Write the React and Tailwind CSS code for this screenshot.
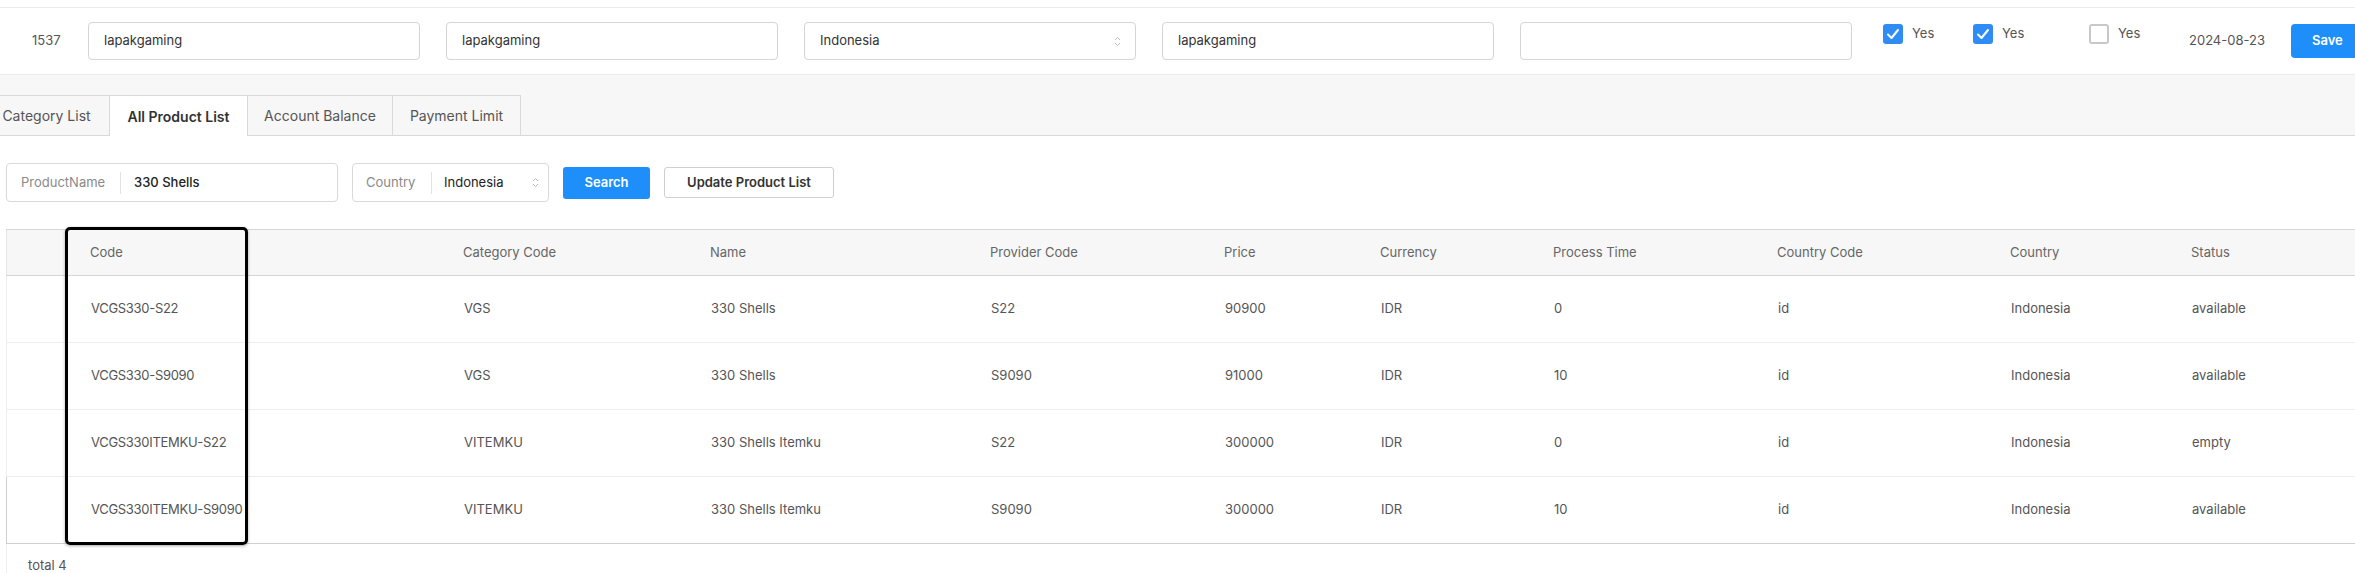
import React from "react";

const rows = [
  { code: "VCGS330-S22", cat: "VGS", name: "330 Shells", provider: "S22", price: "90900", currency: "IDR", time: "0", cc: "id", country: "Indonesia", status: "available" },
  { code: "VCGS330-S9090", cat: "VGS", name: "330 Shells", provider: "S9090", price: "91000", currency: "IDR", time: "10", cc: "id", country: "Indonesia", status: "available" },
  { code: "VCGS330ITEMKU-S22", cat: "VITEMKU", name: "330 Shells Itemku", provider: "S22", price: "300000", currency: "IDR", time: "0", cc: "id", country: "Indonesia", status: "empty" },
  { code: "VCGS330ITEMKU-S9090", cat: "VITEMKU", name: "330 Shells Itemku", provider: "S9090", price: "300000", currency: "IDR", time: "10", cc: "id", country: "Indonesia", status: "available" },
];

const headers = ["", "Code", "Category Code", "Name", "Provider Code", "Price", "Currency", "Process Time", "Country Code", "Country", "Status"];

const gridCols = "grid grid-cols-[72px_373px_247px_280px_234px_156px_173px_224px_233px_181px_1fr]";

const Chevrons = () => (
  <svg width="7" height="11" viewBox="0 0 7 11" fill="none" stroke="#b8bcc4" strokeWidth="1">
    <path d="M1 4 L3.5 1.5 L6 4" />
    <path d="M1 7 L3.5 9.5 L6 7" />
  </svg>
);

const Check = ({ checked }) => (
  <div className={checked ? "w-[20px] h-[20px] shrink-0 rounded-[3px] bg-[#2f8cf4] flex items-center justify-center" : "w-[20px] h-[20px] shrink-0 rounded-[3px] border-2 border-[#c8c8c8] bg-white"}>
    {checked && (
      <svg width="14" height="12" viewBox="0 0 14 12" fill="none" stroke="white" strokeWidth="2" strokeLinecap="round" strokeLinejoin="round">
        <path d="M2 6.5 L5.5 10 L12 2" />
      </svg>
    )}
  </div>
);

const TextInput = ({ value, select }) => (
  <div className="w-[332px] h-[38px] shrink-0 border border-[#d4d4d4] rounded-[4px] bg-white flex items-center pl-[15px] pr-[14px] text-[13px] text-[#333]">
    <span className="flex-1">{value}</span>
    {select && <Chevrons />}
  </div>
);

const App = () => {
  return (
    <div className="w-[2355px] h-[573px] overflow-hidden bg-white text-[#333] font-['Inter','Liberation_Sans',sans-serif]">
      {/* edit row */}
      <div className="mt-[7px] h-[68px] border-t border-b border-[#ececec] flex items-center pl-[32px] overflow-hidden">
        <div className="w-[56px] shrink-0 text-[13px] text-[#555]">1537</div>
        <div className="flex shrink-0 gap-[26px]">
          <TextInput value="lapakgaming" />
          <TextInput value="lapakgaming" />
          <TextInput value="Indonesia" select />
          <TextInput value="lapakgaming" />
          <TextInput value="" />
        </div>
        <div className="ml-[31px] w-[90px] shrink-0 flex items-center gap-[9px] self-start mt-[16px] text-[13px] text-[#555]">
          <Check checked /> Yes
        </div>
        <div className="w-[116px] shrink-0 flex items-center gap-[9px] self-start mt-[16px] text-[13px] text-[#555]">
          <Check checked /> Yes
        </div>
        <div className="w-[100px] shrink-0 flex items-center gap-[9px] self-start mt-[16px] text-[13px] text-[#555]">
          <Check /> Yes
        </div>
        <div className="w-[102px] shrink-0 text-[13px] text-[#555]">2024-08-23</div>
        <button className="h-[34px] w-[72px] shrink-0 rounded-[4px] bg-[#1e8efb] text-white text-[13px] font-semibold text-left pl-[21px]">Save</button>
      </div>

      {/* tabs */}
      <div className="h-[61px] bg-[#f7f7f7] flex items-end border-b border-[#d9d9d9]">
        <div className="flex ml-[-16px] -mb-px text-[14px]">
          <div className="w-[126px] h-[41px] flex items-center justify-center border-t border-r border-b border-[#d9d9d9] text-[#555]">Category List</div>
          <div className="w-[138px] h-[41px] flex items-center justify-center border-t border-r border-[#d9d9d9] bg-white font-semibold text-[#333]">All Product List</div>
          <div className="w-[145px] h-[41px] flex items-center justify-center border-t border-r border-b border-[#d9d9d9] text-[#555]">Account Balance</div>
          <div className="w-[128px] h-[41px] flex items-center justify-center border-t border-r border-b border-[#d9d9d9] text-[#555]">Payment Limit</div>
        </div>
      </div>

      {/* search */}
      <div className="mt-[27px] ml-[6px] flex items-center gap-[14px]">
        <div className="w-[332px] h-[39px] border border-[#d9d9d9] rounded-[4px] flex items-center text-[13px]">
          <span className="pl-[14px] w-[113px] text-[#8a8a8a]">ProductName</span>
          <span className="w-px h-[22px] bg-[#e2e2e2]" />
          <span className="pl-[13px] text-[#222] font-medium">330 Shells</span>
        </div>
        <div className="w-[197px] h-[39px] border border-[#d9d9d9] rounded-[4px] flex items-center text-[13px]">
          <span className="pl-[13px] w-[78px] text-[#8a8a8a]">Country</span>
          <span className="w-px h-[22px] bg-[#e2e2e2]" />
          <span className="pl-[12px] flex-1 text-[#222]">Indonesia</span>
          <span className="pr-[9px]"><Chevrons /></span>
        </div>
        <button className="w-[87px] h-[32px] rounded-[3px] bg-[#1e8efb] text-white text-[13px] font-semibold">Search</button>
        <button className="w-[170px] h-[31px] rounded-[3px] border border-[#cfcfcf] bg-white text-[#333] text-[13px] font-semibold">Update Product List</button>
      </div>

      {/* table */}
      <div className="relative mt-[27px] ml-[6px]">
        <div className={`${gridCols} h-[47px] bg-[#f7f7f7] border-t border-b border-[#d6d6d6] items-center text-[13px] text-[#666]`}>
          {headers.map((h, i) => (
            <div key={i} className={i === 0 ? "h-full border-l border-[#e6e6e6]" : "pl-[12px]"}>{h}</div>
          ))}
        </div>
        {rows.map((r, i) => (
          <div key={i} className={`${gridCols} h-[67px] items-center text-[13px] text-[#555] border-l ${i === rows.length - 1 ? "border-b border-[#d0d0d0]" : "border-b border-[#ededed]"}`}>
            <div />
            <div className="pl-[12px] tracking-[-0.3px]">{r.code}</div>
            <div className="pl-[12px]">{r.cat}</div>
            <div className="pl-[12px]">{r.name}</div>
            <div className="pl-[12px]">{r.provider}</div>
            <div className="pl-[12px]">{r.price}</div>
            <div className="pl-[12px]">{r.currency}</div>
            <div className="pl-[12px]">{r.time}</div>
            <div className="pl-[12px]">{r.cc}</div>
            <div className="pl-[12px]">{r.country}</div>
            <div className="pl-[12px]">{r.status}</div>
          </div>
        ))}
        <div className="h-[44px] border-l border-[#ededed] pl-[21px] flex items-center text-[13px] text-[#555]">total 4</div>

        {/* highlight annotation */}
        <div className="absolute left-[59px] top-[-2px] w-[183px] h-[318px] border-[3px] border-black rounded-[5px] shadow-[0_1px_3px_rgba(0,0,0,0.35)] pointer-events-none" />
      </div>
    </div>
  );
};

export default App;
